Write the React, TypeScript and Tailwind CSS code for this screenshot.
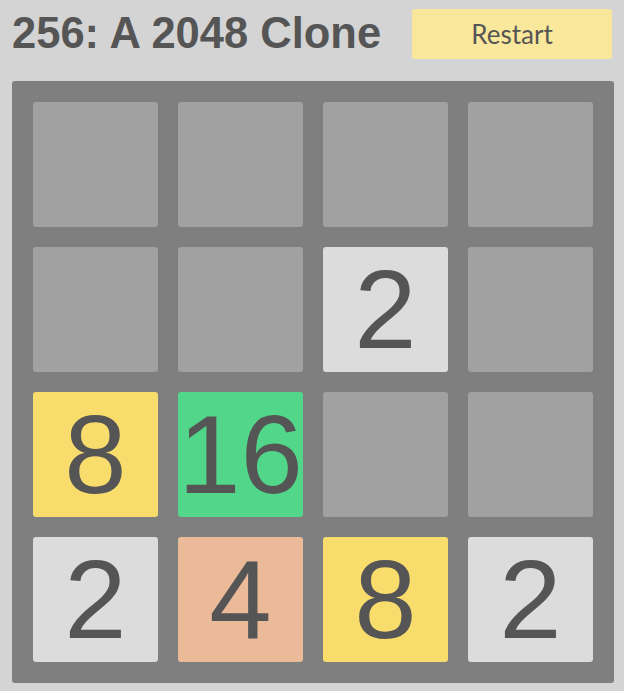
import { useState } from "react";

type Grid = number[][];

const START: Grid = [
  [0, 0, 0, 0],
  [0, 0, 2, 0],
  [8, 16, 0, 0],
  [2, 4, 8, 2],
];

// tile colours by value
function tileClass(value: number) {
  switch (value) {
    case 2:
      return "bg-[#dcdcdc]";
    case 4:
      return "bg-[#ebbb99]";
    case 8:
      return "bg-[#f8dc6c]";
    case 16:
      return "bg-[#52d68a]";
    default:
      return "bg-[#a1a1a1]";
  }
}

function Tile({ value }: { value: number }) {
  return (
    <div
      className={`w-[125px] h-[125px] rounded-[3px] flex items-center justify-center text-[112px] leading-none text-[#555555] ${tileClass(value)}`}
      style={{ fontFamily: '"Liberation Sans", Arial, sans-serif' }}
    >
      {value > 0 ? value : ""}
    </div>
  );
}

export default function App() {
  const [grid, setGrid] = useState<Grid>(START);

  function restart() {
    setGrid(START.map((row) => [...row]));
  }

  return (
    <div className="min-h-screen bg-[#d4d4d4] pt-[9px] pl-3">
      <div className="w-[602px] flex items-center justify-between h-[50px]">
        <h1
          className="text-[43.5px] font-bold leading-none text-[#555555]"
          style={{ fontFamily: '"Liberation Sans", Arial, sans-serif' }}
        >
          256: A 2048 Clone
        </h1>
        <button
          type="button"
          onClick={restart}
          className="w-[200px] h-[50px] mr-[2px] rounded-[3px] bg-[#f9e79b] text-[26px] text-[#555555] leading-none"
          style={{ fontFamily: "Lato, sans-serif" }}
        >
          Restart
        </button>
      </div>

      <div className="mt-[22px] w-[602px] bg-[#7f7f7f] rounded-[3px] p-[21px] grid grid-cols-4 gap-5">
        {grid.flat().map((v, i) => (
          <Tile key={i} value={v} />
        ))}
      </div>
    </div>
  );
}
